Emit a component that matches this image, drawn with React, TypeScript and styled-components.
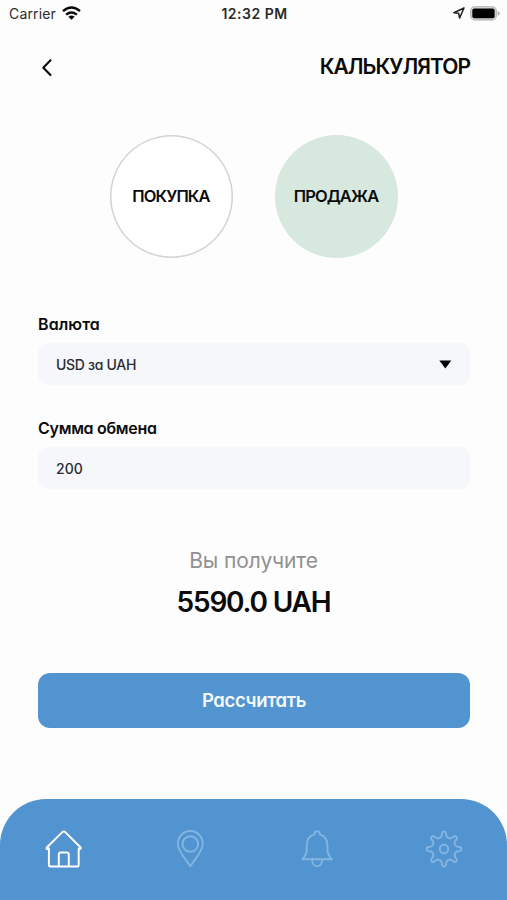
import React from 'react';
import styled, { createGlobalStyle } from 'styled-components';

const GlobalStyle = createGlobalStyle`
  * { box-sizing: border-box; }
  body {
    margin: 0;
    background: #fdfdfd;
    color: #0b0b0c;
    font-family: Inter, "Open Sans", sans-serif;
    font-feature-settings: "cv11" 1;
  }
  button, input { font: inherit; font-feature-settings: inherit; color: inherit; letter-spacing: inherit; }
`;

const Screen = styled.div`
  width: 507px;
  height: 900px;
  display: flex;
  flex-direction: column;
  overflow: hidden;
`;

const StatusBar = styled.div`
  height: 28px;
  flex: none;
  display: grid;
  grid-template-columns: 1fr auto 1fr;
  align-items: center;
  padding: 0 7px 2px 9px;
  font-size: 14px;
  color: #2a2a2a;
`;

const Carrier = styled.div`
  display: flex;
  align-items: center;
  gap: 6px;
  letter-spacing: 0.15px;
  font-feature-settings: normal;
`;

const Clock = styled.div`
  font-weight: 600;
  letter-spacing: 0.5px;
`;

const Indicators = styled.div`
  display: flex;
  justify-content: flex-end;
  align-items: center;
  gap: 5px;
`;

const Header = styled.header`
  height: 77px;
  flex: none;
  display: flex;
  align-items: center;
  justify-content: space-between;
  padding: 0 37px 0 40px;
`;

const BackButton = styled.button`
  display: flex;
  padding: 0;
  border: 0;
  background: none;
`;

const Title = styled.h1`
  margin: 0;
  font-size: 21px;
  font-weight: 600;
  line-height: 26px;
  letter-spacing: -0.95px;
`;

const Modes = styled.div`
  display: flex;
  justify-content: center;
  gap: 42px;
  margin-top: 30px;
`;

const ModeButton = styled.button<{ $active?: boolean }>`
  width: 123px;
  height: 123px;
  flex: none;
  padding: 0 0 2px;
  border-radius: 50%;
  border: 0;
  box-shadow: ${p => (p.$active ? 'none' : 'inset 0 0 0 1.5px #d3d3d4')};
  background: ${p => (p.$active ? '#d7e8df' : '#ffffff')};
  font-size: 16.5px;
  font-weight: 600;
  letter-spacing: -0.88px;
`;

const Form = styled.div`
  display: flex;
  flex-direction: column;
  gap: 33px;
  margin: 56px 37px 0 38px;
`;

const Field = styled.label`
  display: block;
`;

const FieldLabel = styled.span<{ $spacing: number }>`
  display: block;
  height: 29px;
  line-height: 20px;
  font-size: 16px;
  font-weight: 600;
  letter-spacing: ${p => p.$spacing}px;
`;

const FieldBox = styled.span`
  height: 42px;
  display: flex;
  align-items: center;
  justify-content: space-between;
  padding: 0 18px;
  border-radius: 11px;
  background: #f5f7fb;
  font-size: 14px;
  font-weight: 500;
  letter-spacing: -0.3px;
  color: #2b2c2f;
`;

const AmountInput = styled.input`
  width: 100%;
  padding: 0;
  border: 0;
  outline: 0;
  background: none;
  letter-spacing: 0;
`;

const Result = styled.div`
  margin-top: 58px;
  text-align: center;
`;

const ResultCaption = styled.div`
  font-size: 21px;
  line-height: 28px;
  color: #919191;
  letter-spacing: -0.1px;
`;

const ResultValue = styled.div`
  margin-top: 10px;
  font-size: 28px;
  font-weight: 600;
  line-height: 34px;
  letter-spacing: -1.2px;
`;

const SubmitButton = styled.button`
  height: 55px;
  flex: none;
  margin: 54px 37px 0 38px;
  padding: 0 0 1px;
  border: 0;
  border-radius: 12px;
  background: #5194cf;
  color: #f3f8fd;
  font-size: 18.5px;
  font-weight: 600;
  letter-spacing: -0.35px;
`;

const TabBar = styled.nav`
  height: 101px;
  flex: none;
  margin-top: auto;
  display: grid;
  grid-template-columns: repeat(4, 1fr);
  border-radius: 46px 46px 0 0;
  background: #5194cf;
`;

const Tab = styled.button<{ $active?: boolean }>`
  display: flex;
  justify-content: center;
  align-items: flex-start;
  padding: 30px 0 0;
  border: 0;
  background: none;
  color: ${p => (p.$active ? '#ffffff' : '#83b5e2')};
`;

const polar = (r: number, deg: number) => {
  const a = ((deg - 90) * Math.PI) / 180;
  return `${(20 + r * Math.cos(a)).toFixed(2)} ${(20 + r * Math.sin(a)).toFixed(2)}`;
};

const gearPath =
  `M${polar(16, -7)}` +
  Array.from({ length: 8 }, (_, i) => {
    const a = i * 45;
    return `A2 2 0 0 1 ${polar(16, a + 7)}C${polar(10.8, a + 10)} ${polar(10.8, a + 35)} ${polar(16, a + 38)}`;
  }).join('') +
  'Z';

const TabIcon = ({ children }: { children: React.ReactNode }) => (
  <svg width="40" height="40" viewBox="0 0 40 40" fill="none" stroke="currentColor" strokeWidth="1.9" strokeLinecap="round" strokeLinejoin="round">
    {children}
  </svg>
);

const HomeIcon = () => (
  <TabIcon>
    <path strokeWidth="2" d="M5 20.2V36.4Q5 38.2 6.8 38.2H34Q35.4 38.2 35.4 36.6V20.2M5 19.8L2.8 20.3Q2.2 19.5 2.9 18.8L18.2 3.6Q20.2 1.5 22.2 3.6L37.4 18.8Q38 19.5 37.4 20.2L35.4 19.8M15.1 38V26Q15.1 23.8 17.3 23.8H23.2Q25.3 23.8 25.3 26V38" transform="translate(1 .1) scale(.98)" />
  </TabIcon>
);

const PinIcon = () => (
  <TabIcon>
    <path d="M20.3 37.2C15.5 30.3 7.8 22 7.8 14.8A12.5 12.8 0 0 1 32.8 14.8C32.8 22 25.1 30.3 20.3 37.2Z" />
    <circle cx="20.3" cy="15" r="7.8" />
  </TabIcon>
);

const BellIcon = () => (
  <TabIcon>
    <path d="M5.2 30.2C8.4 27.5 9.7 25 9.7 20.5V17C9.7 10.8 12.8 6.7 17.1 5.6C17.5 3.2 18.6 2.2 20.1 2.2S22.7 3.2 23.1 5.6C27.4 6.7 30.5 10.8 30.5 17V20.5C30.5 25 31.8 27.5 35 30.2H5.2Z" />
    <path d="M15.2 30.5V32A4.9 5.1 0 0 0 25 32V30.5" />
  </TabIcon>
);

const GearIcon = () => (
  <TabIcon>
    <path d={gearPath} />
    <circle cx="20" cy="20" r="4.2" />
  </TabIcon>
);

export default function App() {
  return (
    <>
      <GlobalStyle />
      <Screen>
        <StatusBar>
          <Carrier>
            Carrier
            <svg width="19" height="14" viewBox="0 0 19 14" fill="none" stroke="#080808" strokeWidth="2.4">
              <path d="M1 5.1Q9.5-2 18 5.1M4.1 8.6Q9.5 4.3 14.9 8.6" />
              <path fill="#080808" stroke="none" d="M6.4 10.7Q9.5 8.3 12.6 10.7L9.5 13.8Z" />
            </svg>
          </Carrier>
          <Clock>12:32 PM</Clock>
          <Indicators>
            <svg width="12" height="12" viewBox="0 0 12 12" fill="none" stroke="#202020" strokeWidth="1.5" strokeLinejoin="round">
              <path d="M11 1L.9 5.7L5.7 6.3L6.6 11Z" />
            </svg>
            <svg width="30" height="15" viewBox="0 0 30 15">
              <rect x=".7" y=".7" width="25.6" height="13.2" rx="4.2" fill="#d8d8d8" stroke="#b1b1b1" strokeWidth="1.1" />
              <rect x="2.3" y="2.6" width="22.3" height="9.6" rx="2" fill="#000" />
              <path fill="#aaa" d="M27.7 5Q29.7 5.8 29.7 7.4T27.7 9.8Z" />
            </svg>
          </Indicators>
        </StatusBar>
        <Header>
          <BackButton aria-label="Назад">
            <svg width="14" height="20" viewBox="0 0 14 20" fill="none" stroke="#0b0b0c" strokeWidth="2.1" strokeLinecap="round" strokeLinejoin="round">
              <path d="M10.5 3.2L3.3 10.7L10.5 18" />
            </svg>
          </BackButton>
          <Title>КАЛЬКУЛЯТОР</Title>
        </Header>
        <Modes>
          <ModeButton>ПОКУПКА</ModeButton>
          <ModeButton $active>ПРОДАЖА</ModeButton>
        </Modes>
        <Form>
          <Field>
            <FieldLabel $spacing={0.1}>Валюта</FieldLabel>
            <FieldBox>
              USD за UAH
              <svg width="13" height="9" viewBox="0 0 13 9">
                <path d="M.3.6H12.3L6.3 8.4Z" />
              </svg>
            </FieldBox>
          </Field>
          <Field>
            <FieldLabel $spacing={-0.3}>Сумма обмена</FieldLabel>
            <FieldBox>
              <AmountInput defaultValue="200" />
            </FieldBox>
          </Field>
        </Form>
        <Result>
          <ResultCaption>Вы получите</ResultCaption>
          <ResultValue>5590.0 UAH</ResultValue>
        </Result>
        <SubmitButton>Рассчитать</SubmitButton>
        <TabBar>
          <Tab $active aria-label="Главная"><HomeIcon /></Tab>
          <Tab aria-label="Карта"><PinIcon /></Tab>
          <Tab aria-label="Уведомления"><BellIcon /></Tab>
          <Tab aria-label="Настройки"><GearIcon /></Tab>
        </TabBar>
      </Screen>
    </>
  );
}
